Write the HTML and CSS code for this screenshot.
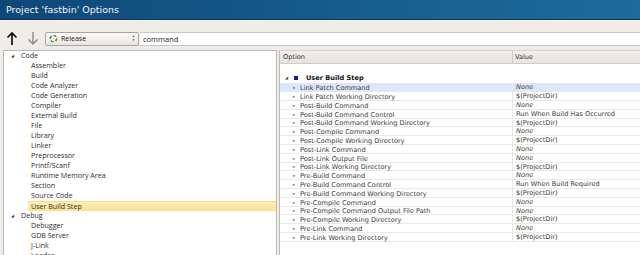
FILE: index.html
```html
<!DOCTYPE html>
<html lang="en">
<head>
    <meta charset="UTF-8">
    <title>Project 'fastbin' Options</title>
    <link rel="stylesheet" href="styles.css">
</head>
<body>

<div class="titlebar">Project 'fastbin' Options</div>

<div class="toolbar">
    <!-- navigation arrows -->
    <svg class="arrow" width="12" height="15" viewBox="0 0 12 15">
        <path d="M6 14V2M1.5 6.5L6 2l4.5 4.5" fill="none" stroke="#111" stroke-width="1.7"/>
    </svg>
    <svg class="arrow arrow-down" width="12" height="15" viewBox="0 0 12 15">
        <path d="M6 1v12M1.5 8.5L6 13l4.5-4.5" fill="none" stroke="#8a8a8a" stroke-width="1.4"/>
    </svg>

    <div class="combo">
        <svg width="9" height="9" viewBox="0 0 10 10">
            <circle cx="5" cy="5" r="3.6" fill="none" stroke="#d33" stroke-width="1.4" stroke-dasharray="3 2.6"/>
            <circle cx="5" cy="5" r="3.6" fill="none" stroke="#3a3" stroke-width="1.4" stroke-dasharray="3 2.6" stroke-dashoffset="5.6"/>
            <circle cx="5" cy="5" r="3.6" fill="none" stroke="#36c" stroke-width="1.4" stroke-dasharray="2 20" stroke-dashoffset="11"/>
        </svg>
        <span class="combo-text">Release</span>
        <span class="spin">&#9650;<br>&#9660;</span>
    </div>

    <div class="search">command</div>
</div>

<div class="panes">
    <div class="tree">
        <div class="node"><span class="tri">&#9698;</span>Code</div>
        <div class="leaf">Assembler</div>
        <div class="leaf">Build</div>
        <div class="leaf">Code Analyzer</div>
        <div class="leaf">Code Generation</div>
        <div class="leaf">Compiler</div>
        <div class="leaf">External Build</div>
        <div class="leaf">File</div>
        <div class="leaf">Library</div>
        <div class="leaf">Linker</div>
        <div class="leaf">Preprocessor</div>
        <div class="leaf">Printf/Scanf</div>
        <div class="leaf">Runtime Memory Area</div>
        <div class="leaf">Section</div>
        <div class="leaf">Source Code</div>
        <div class="leaf selected">User Build Step</div>
        <div class="node"><span class="tri">&#9698;</span>Debug</div>
        <div class="leaf">Debugger</div>
        <div class="leaf">GDB Server</div>
        <div class="leaf">J-Link</div>
        <div class="leaf">Loader</div>
    </div>

    <div class="props">
        <div class="head">
            <div class="col-opt">Option</div>
            <div class="col-val">Value</div>
        </div>
        <div class="spacer"></div>
        <div class="group">
            <span class="tri">&#9698;</span><span class="square"></span>User Build Step
        </div>
        <div id="rows"></div>
    </div>
</div>

<script>
    // option list: [name, value, isDefault]
    const options = [
        ['Link Patch Command', 'None', true],
        ['Link Patch Working Directory', '$(ProjectDir)'],
        ['Post-Build Command', 'None', true],
        ['Post-Build Command Control', 'Run When Build Has Occurred'],
        ['Post-Build Command Working Directory', '$(ProjectDir)'],
        ['Post-Compile Command', 'None', true],
        ['Post-Compile Working Directory', '$(ProjectDir)'],
        ['Post-Link Command', 'None', true],
        ['Post-Link Output File', 'None', true],
        ['Post-Link Working Directory', '$(ProjectDir)'],
        ['Pre-Build Command', 'None', true],
        ['Pre-Build Command Control', 'Run When Build Required'],
        ['Pre-Build Command Working Directory', '$(ProjectDir)'],
        ['Pre-Compile Command', 'None', true],
        ['Pre-Compile Command Output File Path', 'None', true],
        ['Pre-Compile Working Directory', '$(ProjectDir)'],
        ['Pre-Link Command', 'None', true],
        ['Pre-Link Working Directory', '$(ProjectDir)']
    ];

    const rows = document.getElementById('rows');
    options.forEach((opt, i) => {
        const row = document.createElement('div');
        row.className = 'row' + (i === 0 ? ' current' : '');
        row.innerHTML = '<div class="col-opt"><span class="dot">&bull;</span>' + opt[0] + '</div>' +
            '<div class="col-val' + (opt[2] ? ' none' : '') + '">' + opt[1] + '</div>';
        rows.appendChild(row);
    });
</script>

</body>
</html>
```

FILE: styles.css
```css
body {
    margin: 0;
    width: 640px;
    height: 255px;
    overflow: hidden;
    background-color: #efebe7;
    font-family: "DejaVu Sans", sans-serif;
    color: #2e2e2e;
}
.titlebar {
    height: 19px;
    line-height: 19px;
    padding-left: 6px;
    font-size: 9.5px;
    color: #f2f6fa;
    background: linear-gradient(to right, #0f4777, #16608f 60%, #1b6c9b);
    border-bottom: 1px solid #0b3557;
}
.toolbar {
    display: flex;
    align-items: center;
    height: 23px;
    padding: 6px 0 0 6px;
    border-top: 1px solid #f7f5f3;
}
.arrow {
    margin-right: 8px;
}
.arrow-down {
    margin-left: 1px;
    margin-right: 6px;
}
.combo {
    display: flex;
    align-items: center;
    width: 86px;
    height: 12px;
    padding: 0 3px;
    border: 1px solid #a9a49d;
    border-radius: 2px;
    background: linear-gradient(#fbfaf9, #e8e5e1);
    font-family: "Open Sans", sans-serif;
    font-size: 7px;
    color: #222;
}
.combo-text {
    flex: 1;
    margin-left: 3px;
}
.spin {
    font-size: 3px;
    line-height: 3.5px;
    color: #333;
    text-align: center;
}
.search {
    flex: 1;
    height: 12px;
    line-height: 12px;
    margin-left: 1px;
    padding-left: 3px;
    background-color: white;
    border-top: 1px solid #c9c5bf;
    border-bottom: 1px solid #c9c5bf;
    font-family: "Open Sans", sans-serif;
    font-size: 7.5px;
    color: #222;
}
.panes {
    display: flex;
    gap: 2px;
    padding-left: 3px;
    height: 205px;
}
.tree {
    width: 272px;
    background-color: white;
    border: 1px solid #bdb8b1;
    border-bottom: none;
    font-family: "Open Sans", sans-serif;
    font-size: 7.1px;
    color: #2e2e2e;
}
.node, .leaf {
    height: 10px;
    line-height: 9px;
    white-space: nowrap;
}
.node {
    padding-left: 7px;
}
.leaf {
    padding-left: 27px;
}
.tri {
    display: inline-block;
    width: 10px;
    font-size: 4px;
    color: #333;
    vertical-align: top;
}
.selected {
    margin-left: 24px;
    padding-left: 3px;
    background: linear-gradient(#fdeeb8, #fbe18e);
    border-top: 1px solid #f5dd95;
    height: 9px;
    line-height: 9px;
}
.props {
    flex: 1;
    background-color: white;
    border-left: 1px solid #bdb8b1;
    border-top: 1px solid #d8d4ce;
    font-size: 6.6px;
    color: #333;
}
.head {
    display: flex;
    height: 12px;
    line-height: 12px;
    background: linear-gradient(#f1eeeb, #e7e4e0);
    border-bottom: 1px solid #cfcbc5;
}
.head .col-opt {
    border-right: 1px solid #cfcbc5;
}
.head .col-val {
    padding-left: 2px;
}
.col-opt {
    box-sizing: border-box;
    width: 233px;
    padding-left: 3px;
    white-space: nowrap;
}
.col-val {
    flex: 1;
    padding-left: 3px;
    white-space: nowrap;
}
.spacer {
    height: 9px;
}
.group {
    height: 10px;
    line-height: 10px;
    padding-left: 5px;
    font-weight: bold;
    color: #111;
}
.group .tri {
    width: 8px;
}
.square {
    display: inline-block;
    width: 4px;
    height: 4px;
    margin: 0 8px 0 1px;
    background-color: #1a1a9c;
    vertical-align: 0;
}
.row {
    display: flex;
    height: 9px;
    line-height: 9px;
    box-sizing: border-box;
    border-bottom: 1px solid #e8e8e8;
    color: #3a3a3a;
}
.row:nth-child(5n) {
    height: 8px;
    line-height: 8px;
}
.row .col-opt {
    padding-left: 12px;
    border-right: 1px solid #e8e8e8;
}
.current {
    background-color: #dde7fb;
}
.dot {
    display: inline-block;
    width: 8px;
    font-size: 6px;
    color: #666;
}
.none {
    font-style: italic;
}
```
